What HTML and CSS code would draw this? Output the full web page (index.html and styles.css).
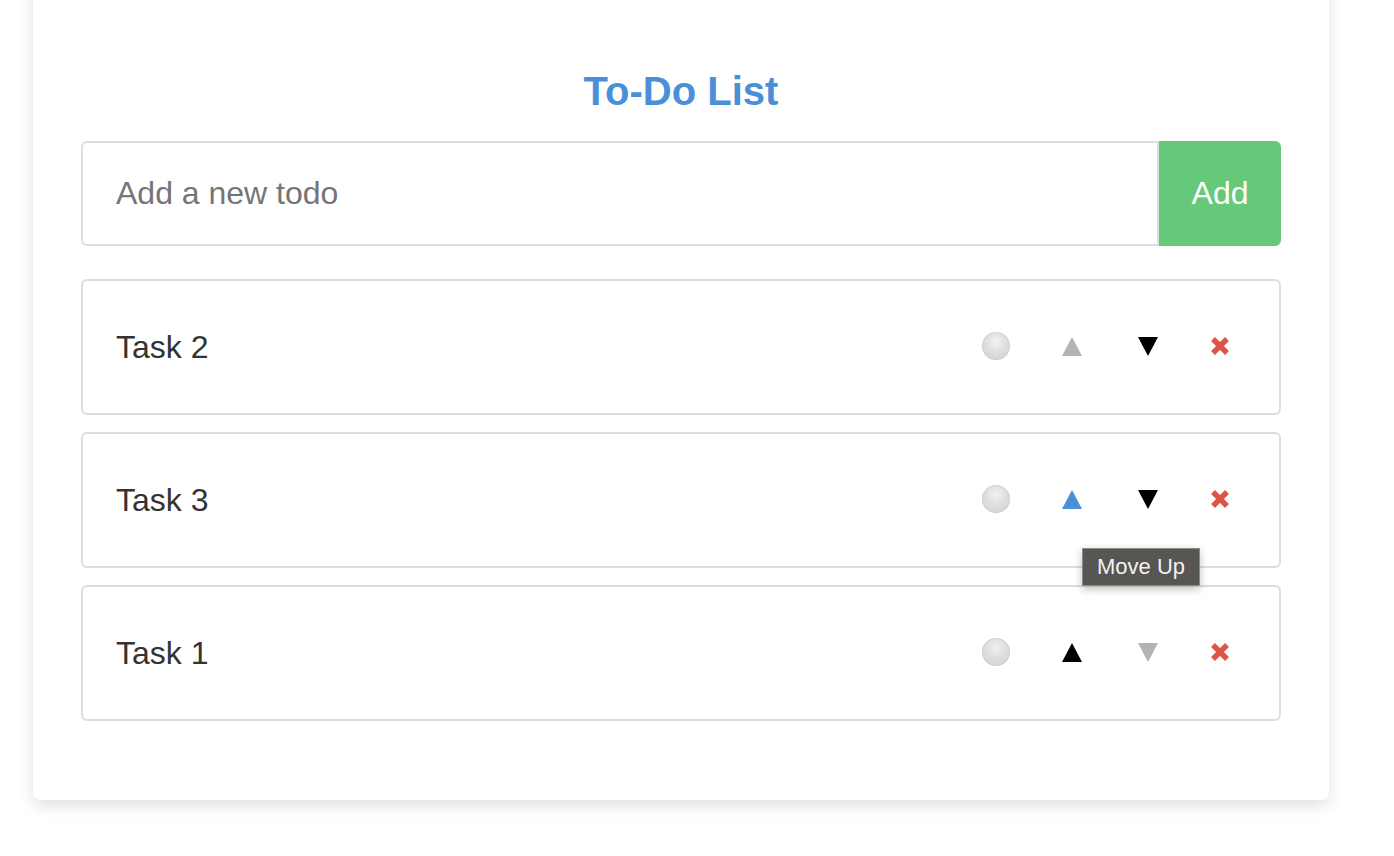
FILE: index.html
```html
<!DOCTYPE html>
<html lang="en">
<head>
<meta charset="utf-8">
<title>To-Do List</title>
<link rel="stylesheet" href="styles.css">
</head>
<body>
<div class="page">
<div class="card">
  <h1 class="title">To-Do List</h1>
  <form class="add-form">
    <input class="add-input" type="text" placeholder="Add a new todo">
    <button class="add-btn" type="button">Add</button>
  </form>
  <ul class="list">
    <li class="item">
      <span class="item-text">Task 2</span>
      <div class="actions">
        <button class="btn btn-check" type="button"><span class="circle"></span></button>
        <button class="btn btn-up disabled" type="button"><svg width="20" height="19" viewBox="0 0 20 19"><polygon points="10,0 20,19 0,19"/></svg></button>
        <button class="btn btn-down" type="button"><svg width="20" height="19" viewBox="0 0 20 19"><polygon points="0,0 20,0 10,19"/></svg></button>
        <button class="btn btn-del" type="button"><svg width="20" height="20" viewBox="0 0 20 20"><path d="M3 3 L17 17 M17 3 L3 17"/></svg></button>
      </div>
    </li>
    <li class="item">
      <span class="item-text">Task 3</span>
      <div class="actions">
        <button class="btn btn-check" type="button"><span class="circle"></span></button>
        <button class="btn btn-up hover" type="button"><svg width="20" height="19" viewBox="0 0 20 19"><polygon points="10,0 20,19 0,19"/></svg></button>
        <button class="btn btn-down" type="button"><svg width="20" height="19" viewBox="0 0 20 19"><polygon points="0,0 20,0 10,19"/></svg></button>
        <button class="btn btn-del" type="button"><svg width="20" height="20" viewBox="0 0 20 20"><path d="M3 3 L17 17 M17 3 L3 17"/></svg></button>
      </div>
      <div class="tooltip">Move Up</div>
    </li>
    <li class="item">
      <span class="item-text">Task 1</span>
      <div class="actions">
        <button class="btn btn-check" type="button"><span class="circle"></span></button>
        <button class="btn btn-up" type="button"><svg width="20" height="19" viewBox="0 0 20 19"><polygon points="10,0 20,19 0,19"/></svg></button>
        <button class="btn btn-down disabled" type="button"><svg width="20" height="19" viewBox="0 0 20 19"><polygon points="0,0 20,0 10,19"/></svg></button>
        <button class="btn btn-del" type="button"><svg width="20" height="20" viewBox="0 0 20 20"><path d="M3 3 L17 17 M17 3 L3 17"/></svg></button>
      </div>
    </li>
  </ul>
</div>
</div>
</body>
</html>
```

FILE: styles.css
```css
* { box-sizing: border-box; }

html, body {
  margin: 0;
  padding: 0;
  background: #ffffff;
  font-family: "Liberation Sans", Arial, Helvetica, sans-serif;
}

.page {
  height: 856px;
  overflow: hidden;
  padding: 0 0 0 33px;
}

.card {
  width: 1296px;
  margin: -20px 0 0 0;
  padding: 48px 48px 79px 48px;
  background: #ffffff;
  border-radius: 8px;
  box-shadow: 0 6px 16px rgba(0, 0, 0, 0.12);
}

.title {
  margin: 40px 0 27px 0;
  text-align: center;
  font-size: 40px;
  line-height: 46px;
  font-weight: bold;
  color: #4a90d9;
}

.add-form {
  display: flex;
  height: 105px;
  margin: 0 0 33px 0;
}

.add-input {
  flex: 1;
  min-width: 0;
  height: 105px;
  border: 2px solid #dddddd;
  border-radius: 6px 0 0 6px;
  padding: 0 0 0 33px;
  font-family: "Liberation Sans", Arial, sans-serif;
  font-size: 32px;
  color: #333333;
  outline: none;
}

.add-input::placeholder { color: #757575; }

.add-btn {
  width: 122px;
  height: 105px;
  border: none;
  border-radius: 0 6px 6px 0;
  background: #66c97a;
  color: #ffffff;
  font-family: "Liberation Sans", Arial, sans-serif;
  font-size: 32px;
  padding: 0;
}

.list {
  list-style: none;
  margin: 0;
  padding: 0;
  display: flex;
  flex-direction: column;
  gap: 17px;
}

.item {
  position: relative;
  display: flex;
  align-items: center;
  height: 136px;
  border: 2px solid #dddddd;
  border-radius: 6px;
  padding: 0 39px 0 33px;
}

.item-text {
  flex: 1;
  font-size: 32px;
  color: #333333;
}

.actions {
  display: flex;
  align-items: center;
  margin-top: -2px;
}

.btn {
  width: 40px;
  height: 40px;
  padding: 0;
  border: none;
  background: none;
  display: flex;
  align-items: center;
  justify-content: center;
}

.btn + .btn { margin-left: 36px; }
.btn-del { margin-left: 32px !important; }

.circle {
  display: block;
  width: 28px;
  height: 28px;
  border-radius: 50%;
  background: radial-gradient(circle at 50% 35%, #f2f2f2 0%, #dedede 45%, #d3d3d3 100%);
  box-shadow: inset 0 0 0 1px rgba(0, 0, 0, 0.06);
}

.btn-up svg, .btn-down svg { fill: #000000; }
.btn-up.disabled svg, .btn-down.disabled svg { fill: #b3b3b3; }
.btn-up.hover svg { fill: #4a90d9; }

.btn-del svg path {
  stroke: #dc5544;
  stroke-width: 5.5;
  fill: none;
}

.tooltip {
  position: absolute;
  left: 999px;
  top: 114px;
  width: 118px;
  height: 38px;
  background: #575653;
  border: 1px solid #8c8c8c;
  color: #f2f2f2;
  font-size: 22px;
  display: flex;
  align-items: center;
  justify-content: center;
  box-shadow: 0 3px 8px rgba(0, 0, 0, 0.25);
  z-index: 2;
}
```
